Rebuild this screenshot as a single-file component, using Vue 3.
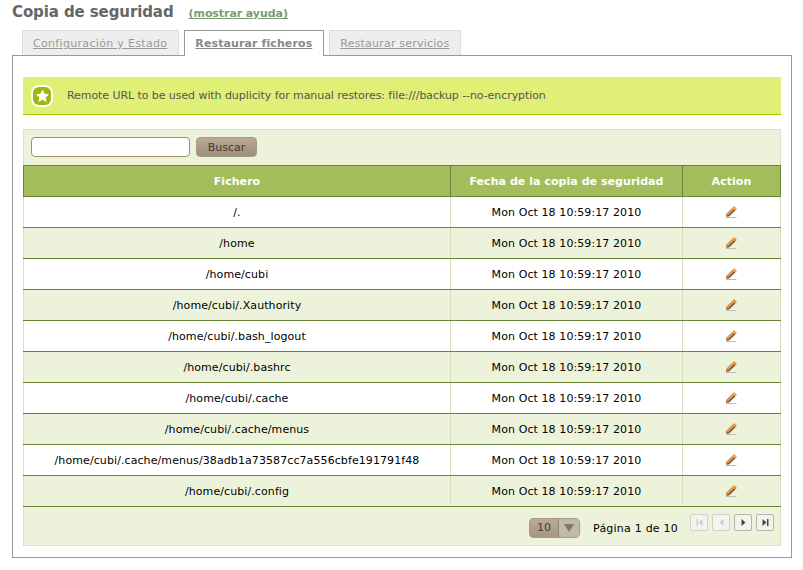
<script setup>
const rows = ['/.', '/home', '/home/cubi', '/home/cubi/.Xauthority', '/home/cubi/.bash_logout', '/home/cubi/.bashrc', '/home/cubi/.cache', '/home/cubi/.cache/menus', '/home/cubi/.cache/menus/38adb1a73587cc7a556cbfe191791f48', '/home/cubi/.config']
</script>

<template>
  <div class="page">
    <div class="head">
      <h1>Copia de seguridad</h1>
      <a class="help">(mostrar ayuda)</a>
    </div>
    <div class="tabs">
      <a class="tab t1">Configuración y Estado</a>
      <a class="tab active">Restaurar ficheros</a>
      <a class="tab t3">Restaurar servicios</a>
    </div>
    <div class="panel">
      <div class="banner">
        <svg class="star" width="24" height="24" viewBox="0 0 24 24">
          <rect x="1" y="1" width="22" height="22" rx="8" fill="#fff" />
          <rect x="3" y="3" width="18" height="18" rx="6" fill="#9dba0c" />
          <path d="M12.5 5.5l2 4.2 4.5.6-3.3 3.1.9 4.6-4.1-2.3-4.1 2.3.9-4.6L6 10.3l4.5-.6z" fill="#fff" />
        </svg>
        <span>Remote URL to be used with duplicity for manual restores: file:///backup --no-encryption</span>
      </div>
      <div class="box">
        <div class="filter">
          <input class="search" type="text" />
          <button class="btn">Buscar</button>
        </div>
        <table>
          <thead>
            <tr>
              <th class="c1">Fichero</th>
              <th class="c2">Fecha de la copia de seguridad</th>
              <th class="c3">Action</th>
            </tr>
          </thead>
          <tbody>
            <tr v-for="(r, i) in rows" :key="r" :class="{ odd: i % 2 === 1 }">
              <td>{{ r }}</td>
              <td>Mon Oct 18 10:59:17 2010</td>
              <td>
                <svg class="pen" width="11" height="12" viewBox="0 0 11 12">
                  <path d="M0 11.5h10.5" stroke="#bdbdb0" stroke-width="1" />
                  <path d="M.3 7.6L6.6 1.4l2.8 2.8-6.3 6.2H.3z" fill="#cf9a62" />
                  <path d="M.3 10.4V8.2l2.2 2.2zM2.8 10.4l6.6-6.2-.9-.9-6.5 6.2z" fill="#7c4f28" />
                  <path d="M6.6 1.4L8.1 0l2.9 2.9-1.6 1.3z" :fill="i % 2 === 1 ? '#ff8c00' : '#f4a040'" />
                </svg>
              </td>
            </tr>
          </tbody>
        </table>
        <div class="foot">
          <div class="select"><span class="num">10</span><span class="arrow"><i></i></span></div>
          <span class="pageinfo">Página 1 de 10</span>
          <div class="pager">
            <span class="pg dim"><svg width="9" height="9" viewBox="0 0 9 9"><path d="M1.5 1h1.5v7H1.5zM7.5 1v7L3.5 4.5z" fill="#ccc" /></svg></span>
            <span class="pg dim"><svg width="9" height="9" viewBox="0 0 9 9"><path d="M6.5 1v7L2.5 4.5z" fill="#ccc" /></svg></span>
            <span class="pg"><svg width="9" height="9" viewBox="0 0 9 9"><path d="M2.5 1v7l4-3.5z" fill="#444" /></svg></span>
            <span class="pg"><svg width="9" height="9" viewBox="0 0 9 9"><path d="M1.5 1v7l4-3.5zM6 1h1.5v7H6z" fill="#444" /></svg></span>
          </div>
        </div>
      </div>
    </div>
  </div>
</template>

<style scoped>
.page {
  width: 803px;
  height: 570px;
  overflow: hidden;
  box-sizing: border-box;
  padding: 0 11px 0 12px;
  font-family: "DejaVu Sans", sans-serif;
  font-size: 11px;
  color: #000;
  background: #fff;
}
.head {
  display: flex;
  align-items: baseline;
  height: 30px;
  padding-top: 2px;
  box-sizing: border-box;
}
h1 {
  margin: 0;
  font-size: 15px;
  line-height: 20px;
  font-weight: bold;
  color: #666;
  letter-spacing: -.1px;
}
.help {
  margin-left: 15px;
  font-size: 11px;
  font-weight: bold;
  color: #7a9a72;
  text-decoration: underline;
  letter-spacing: -.07px;
}
.tabs {
  display: flex;
  height: 26px;
  padding-left: 10px;
  gap: 5px;
  margin-bottom: -1px;
  position: relative;
}
.tab {
  box-sizing: border-box;
  height: 25px;
  padding: 0 11px 0 10px;
  line-height: 25px;
  background: #eee;
  border: 1px solid #ddd;
  border-bottom: 0;
  color: #999;
  text-decoration: underline;
}
.t1 { letter-spacing: .32px; }
.t3 { letter-spacing: .21px; }
.tab.active {
  height: 26px;
  background: #fff;
  border: 1px solid #999;
  border-bottom: 0;
  font-weight: bold;
  color: #888;
  letter-spacing: .11px;
}
.panel {
  box-sizing: border-box;
  height: 503px;
  border: 1px solid #999;
  padding: 21px 10px 0;
}
.banner {
  box-sizing: border-box;
  display: flex;
  align-items: center;
  height: 38px;
  padding-left: 7px;
  background: #e0ef75;
  border-bottom: 1px solid #a9c800;
  color: #555;
  gap: 13px;
  letter-spacing: -.07px;
}
.box {
  margin-top: 14px;
  height: 417px;
  box-sizing: border-box;
  background: #edf3db;
  border: 1px solid #dde3c8;
}
.filter {
  display: flex;
  align-items: flex-start;
  height: 35px;
  padding: 7px 0 0 7px;
  gap: 6px;
  box-sizing: border-box;
}
.search {
  box-sizing: border-box;
  width: 159px;
  height: 20px;
  border: 1px solid #a09070;
  border-radius: 4px;
  background: #fff;
  padding: 0;
}
.btn {
  box-sizing: border-box;
  width: 61px;
  height: 20px;
  padding: 0;
  border: 1px solid #a89c88;
  border-radius: 4px;
  background: linear-gradient(#b8aa96, #a08e78);
  font-family: inherit;
  font-size: 11px;
  color: #443c30;
}
table {
  width: 757px;
  border-collapse: collapse;
  table-layout: fixed;
  margin-left: -1px;
}
th {
  height: 31px;
  box-sizing: border-box;
  background: #a4bd5c;
  border: 1px solid #688436;
  color: #fff;
  font-size: 11px;
  font-weight: bold;
  padding: 0;
  letter-spacing: .05px;
}
.c1 { width: 427px; }
.c2 { width: 232px; }
.c3 { width: 98px; }
td {
  height: 31px;
  box-sizing: border-box;
  text-align: center;
  padding: 1px 0 0;
  border-bottom: 1px solid #688436;
  border-left: 1px solid #d8dfc0;
  border-right: 1px solid #d8dfc0;
  background: #fff;
  letter-spacing: .09px;
}
.odd td { background: #edf3db; }
.pen { display: block; margin: -2px auto 0; }
.foot {
  display: flex;
  align-items: flex-start;
  justify-content: flex-end;
  height: 38px;
  padding: 11px 6px 0 0;
  box-sizing: border-box;
}
.select {
  box-sizing: border-box;
  display: flex;
  width: 51px;
  height: 20px;
  border: 1px solid #a89c88;
  border-radius: 4px;
  background: linear-gradient(#b8aa96, #a69680);
  color: #443c30;
  line-height: 18px;
}
.num {
  width: 28px;
  text-align: center;
  border-right: 1px solid #958672;
}
.arrow {
  flex: 1;
  display: flex;
  align-items: center;
  justify-content: center;
  background: #c4baa8;
}
.arrow i {
  width: 0;
  height: 0;
  border: 5px solid transparent;
  border-top: 8px solid #7d776c;
  border-bottom: 0;
}
.pageinfo {
  margin: 0 12px 0 13px;
  line-height: 22px;
  letter-spacing: .22px;
}
.pager {
  display: flex;
  gap: 4px;
  margin-top: -4px;
}
.pg {
  box-sizing: border-box;
  width: 18px;
  height: 17px;
  display: flex;
  align-items: center;
  justify-content: center;
  border: 1px solid #b4b4ac;
  border-radius: 2px;
  background: #f4f4ee;
}
.pg.dim { border-color: #d2d2ca; }
</style>
